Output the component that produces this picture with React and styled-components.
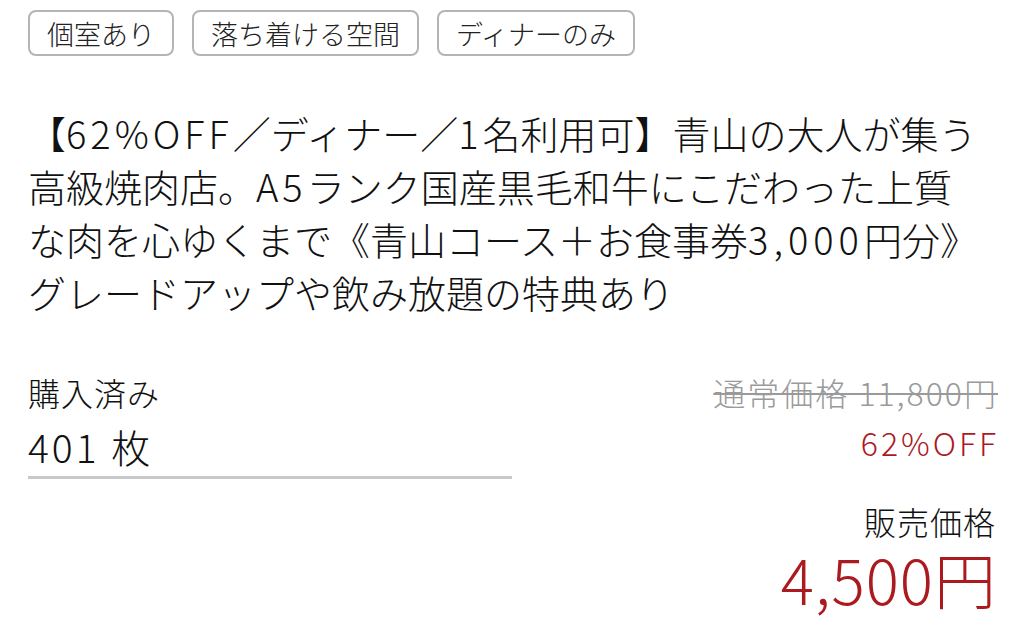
import React from "react";
import styled, { createGlobalStyle } from "styled-components";

const GlobalStyle = createGlobalStyle`
  html, body {
    margin: 0;
    padding: 0;
    background: #fff;
  }
  body {
    font-family: "Noto Sans CJK JP", "Noto Sans", sans-serif;
    font-weight: 300;
    color: #111;
  }
`;

const Page = styled.div`
  width: 1024px;
  height: 623px;
  box-sizing: border-box;
  padding: 10px 28px 0 28px;
  overflow: hidden;
`;

const TagRow = styled.div`
  display: flex;
  gap: 18px;
`;

const Tag = styled.span`
  display: inline-flex;
  align-items: center;
  height: 46px;
  box-sizing: border-box;
  padding: 0 17px;
  border: 2px solid #b4b4b4;
  border-radius: 8px;
  font-size: 27px;
  line-height: 1;
  color: #222;
`;

const Title = styled.p`
  margin: 50px 0 0 0;
  font-size: 38px;
  line-height: 53px;
  white-space: nowrap;
  color: #111;
`;

const Latin = styled.span`
  letter-spacing: ${(p) => p.$spacing || 4}px;
`;

const Stats = styled.div`
  display: grid;
  grid-template-columns: 484px 1fr;
  margin-top: 51px;
`;

const Bought = styled.div`
  display: flex;
  flex-direction: column;
  align-self: start;
  border-bottom: 3px solid #c8c8c8;
  padding-bottom: 3px;
`;

const Label = styled.span`
  font-size: 32px;
  line-height: 46px;
  letter-spacing: 1px;
  color: #111;
  margin-top: ${(p) => p.$gap || 0}px;
`;

const Count = styled.span`
  font-size: 39px;
  line-height: 54px;
  letter-spacing: 3px;
  margin-top: 4px;
`;

const PriceBox = styled.div`
  display: flex;
  flex-direction: column;
  align-items: flex-end;
`;

const Regular = styled.span`
  font-size: 32px;
  line-height: 46px;
  letter-spacing: 2px;
  margin-right: -2px;
  color: #9a9a9a;
  text-decoration: line-through;
  text-decoration-thickness: 2px;
`;

const Off = styled.span`
  font-size: 32px;
  line-height: 50px;
  letter-spacing: 3px;
  margin-right: -3px;
  margin-top: 2px;
  color: #ab1a1f;
`;

const Price = styled.span`
  font-size: 62px;
  line-height: 68px;
  letter-spacing: 1px;
  margin-right: -1px;
  color: #ab1a1f;
`;

export default function App() {
  return (
    <>
      <GlobalStyle />
      <Page>
        <TagRow>
          <Tag>個室あり</Tag>
          <Tag>落ち着ける空間</Tag>
          <Tag>ディナーのみ</Tag>
        </TagRow>
        <Title>
          【<Latin>62%OFF</Latin>／ディナー／<Latin>1</Latin>名利用可】青山の大人が集う
          <br />
          高級焼肉店。<Latin>A5</Latin>ランク国産黒毛和牛にこだわった上質
          <br />
          な肉を心ゆくまで《青山コース＋お食事券<Latin $spacing={5}>3,000</Latin>円分》
          <br />
          グレードアップや飲み放題の特典あり
        </Title>
        <Stats>
          <Bought>
            <Label>購入済み</Label>
            <Count>401 枚</Count>
          </Bought>
          <PriceBox>
            <Regular>通常価格 11,800円</Regular>
            <Off>62%OFF</Off>
            <Label $gap={31}>販売価格</Label>
            <Price>4,500円</Price>
          </PriceBox>
        </Stats>
      </Page>
    </>
  );
}
